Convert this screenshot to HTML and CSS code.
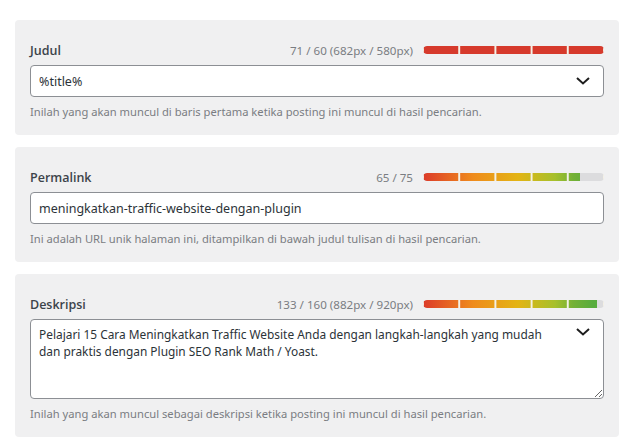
FILE: index.html
```html
<!DOCTYPE html>
<html lang="id">
<head>
  <meta charset="UTF-8" />
  <meta name="viewport" content="width=device-width, initial-scale=1.0"/>
  <title>Snippet Editor</title>
  <link rel="stylesheet" href="styles.css">
</head>
<body>
  <div class="container">

    <!-- Judul -->
    <section class="panel">
      <div class="panel-head">
        <label class="panel-label" for="title">Judul</label>
        <div class="meter">
          <span class="meter-text">71 / 60 (682px / 580px)</span>
          <div class="bar">
            <div class="bar-fill bar-over" style="width: 100%"></div>
          </div>
        </div>
      </div>
      <div class="field">
        <input type="text" id="title" value="%title%" />
        <svg class="chevron" width="14" height="8" viewBox="0 0 14 8"><path d="M1 1l6 5.5L13 1" fill="none" stroke="#1e1e1e" stroke-width="2"/></svg>
      </div>
      <p class="hint">Inilah yang akan muncul di baris pertama ketika posting ini muncul di hasil pencarian.</p>
    </section>

    <!-- Permalink -->
    <section class="panel">
      <div class="panel-head">
        <label class="panel-label" for="permalink">Permalink</label>
        <div class="meter">
          <span class="meter-text">65 / 75</span>
          <div class="bar">
            <div class="bar-fill" style="width: 86.7%"></div>
          </div>
        </div>
      </div>
      <div class="field">
        <input type="text" id="permalink" value="meningkatkan-traffic-website-dengan-plugin" />
      </div>
      <p class="hint">Ini adalah URL unik halaman ini, ditampilkan di bawah judul tulisan di hasil pencarian.</p>
    </section>

    <!-- Deskripsi -->
    <section class="panel">
      <div class="panel-head">
        <label class="panel-label" for="desc">Deskripsi</label>
        <div class="meter">
          <span class="meter-text">133 / 160 (882px / 920px)</span>
          <div class="bar">
            <div class="bar-fill" style="width: 95.9%"></div>
          </div>
        </div>
      </div>
      <div class="field">
        <textarea id="desc">Pelajari 15 Cara Meningkatkan Traffic Website Anda dengan langkah-langkah yang mudah dan praktis dengan Plugin SEO Rank Math / Yoast.</textarea>
        <svg class="chevron chevron-top" width="14" height="8" viewBox="0 0 14 8"><path d="M1 1l6 5.5L13 1" fill="none" stroke="#1e1e1e" stroke-width="2"/></svg>
      </div>
      <p class="hint">Inilah yang akan muncul sebagai deskripsi ketika posting ini muncul di hasil pencarian.</p>
    </section>

  </div>
</body>
</html>
```

FILE: styles.css
```css
body {
  margin: 0;
  background: #fff;
  font-family: 'Noto Sans', 'Open Sans', sans-serif;
  color: #1e1e1e;
}

.container {
  padding: 20px 18px 0 15px;
}

.panel {
  background: #f0f0f1;
  border-radius: 4px;
  padding: 20px 15px 15px;
  margin-bottom: 12px;
}

.panel-head {
  display: flex;
  justify-content: space-between;
  align-items: center;
  height: 20px;
  margin-bottom: 5px;
}

.panel-label {
  font-family: 'Open Sans', sans-serif;
  font-size: 12.5px;
  font-weight: 600;
  color: #3c434a;
}

.meter {
  display: flex;
  align-items: center;
  gap: 10px;
}

.meter-text {
  font-size: 11.6px;
  color: #7a7d82;
}

.bar {
  position: relative;
  width: 181px;
  height: 8px;
  background: #dcdcde;
  border-radius: 4px;
  overflow: hidden;
}

.bar-fill {
  height: 100%;
  background: linear-gradient(to right, #dc3b2a 0, #ef8b1c 50px, #e3b414 95px, #a6c02c 132px, #74b136 150px, #57ac3d 170px);
  background-size: 181px 100%;
  border-radius: 4px 0 0 4px;
}

.bar-over {
  background: #d63a2c;
}

/* разделители сегментов */
.bar::after {
  content: '';
  position: absolute;
  inset: 0;
  background: linear-gradient(to right, transparent calc(100% - 2px), #f4f1e6 0);
  background-size: 20% 100%;
  background-position: 1px 0;
}

.field {
  position: relative;
}

input, textarea {
  box-sizing: border-box;
  width: 100%;
  border: 1px solid #8c8f94;
  border-radius: 4px;
  background: #fff;
  font-family: inherit;
  font-size: 12.5px;
  color: #2c3338;
  margin: 0;
  display: block;
}

input {
  height: 32px;
  padding: 0 40px 0 8px;
}

textarea {
  height: 80px;
  padding: 6px 42px 6px 8px;
  font-size: 11.9px;
  line-height: 17px;
  resize: vertical;
}

.chevron {
  position: absolute;
  right: 14px;
  top: 12px;
}

.chevron-top {
  top: 9px;
}

.hint {
  margin: 7px 0 0;
  font-size: 11.2px;
  line-height: 16px;
  color: #7a7d82;
}
```
